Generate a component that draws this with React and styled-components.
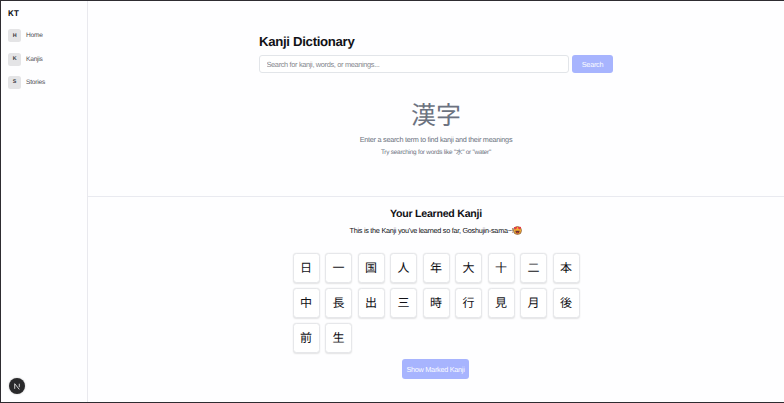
import React from "react";
import styled, { createGlobalStyle } from "styled-components";

const GlobalStyle = createGlobalStyle`
  * { box-sizing: border-box; }
  body { margin: 0; overflow: hidden; background: #fefeff; }
  h1, h2, p { margin: 0; }
`;

const Page = styled.div`
  display: flex;
  width: 784px;
  height: 403px;
  border: solid #2e2c31;
  border-width: 1px 0 1px 1px;
  background: #fefeff;
  color: #111116;
  font-family: "Liberation Sans", "Noto Sans CJK JP", sans-serif;
  text-rendering: geometricPrecision;
  white-space: nowrap;
`;

const Sidebar = styled.aside`
  display: flex;
  flex-direction: column;
  width: 87px;
  flex: none;
  padding: 7px 0 7px 7px;
  border-right: 1px solid #e9e9ee;
`;

const Brand = styled.div`
  height: 11px;
  font: 700 8px/11px Inter, sans-serif;
  letter-spacing: 0;
`;

const Nav = styled.nav`
  display: flex;
  flex-direction: column;
  gap: 10px;
  margin-top: 10px;
`;

const NavItem = styled.a`
  display: flex;
  align-items: center;
  gap: 5px;
  height: 13.4px;
  color: #4c4c53;
  font-size: 6.6px;
  letter-spacing: -0.22px;
`;

const NavBadge = styled.span`
  display: grid;
  place-items: center;
  width: 13px;
  height: 13px;
  border-radius: 2.5px;
  background: #e4e4e6;
  color: #38383e;
  font-size: 5.4px;
  font-weight: 700;
`;

const DevBadge = styled.div`
  display: grid;
  place-items: center;
  width: 16px;
  height: 16px;
  margin: auto 0 1px 1px;
  border-radius: 50%;
  background: #29292b;
  box-shadow: 0 0 2px #0004;
`;

const Main = styled.main`
  flex: 1;
  display: flex;
  flex-direction: column;
`;

const SearchSection = styled.section`
  height: 196px;
  padding-top: 32px;
  border-bottom: 1px solid #e9eaf0;
`;

const SearchPanel = styled.div`
  width: 354px;
  margin: 0 auto;
`;

const Title = styled.h1`
  font-size: 13.2px;
  line-height: 17px;
  letter-spacing: -0.31px;
`;

const SearchForm = styled.div`
  display: flex;
  gap: 3.5px;
  margin-top: 5px;
`;

const SearchInput = styled.input`
  flex: 1;
  min-width: 0;
  height: 18px;
  padding: 1px 6.5px 0;
  border: 1px solid #e2e5e9;
  border-radius: 3px;
  outline: none;
  background: #fff;
  font: 7.4px "Liberation Sans", sans-serif;
  letter-spacing: -0.34px;
  text-rendering: inherit;
  &::placeholder { color: #85878e; opacity: 1; }
`;

const Button = styled.button`
  flex: none;
  width: ${(p) => p.$width}px;
  height: ${(p) => p.$height}px;
  padding: 0;
  border: 0;
  border-radius: 3px;
  background: #a7b4fe;
  color: #fafbff;
  font: 7.3px "Liberation Sans", sans-serif;
  letter-spacing: -0.28px;
  text-rendering: inherit;
`;

const EmptyState = styled.div`
  display: flex;
  flex-direction: column;
  align-items: center;
  margin-top: 23px;
  color: #6b7280;
`;

const LargeKanji = styled.div`
  height: 38px;
  font: 25px/36px "Noto Sans CJK JP", sans-serif;
`;

const Hint = styled.p`
  height: 12px;
  font-size: ${(p) => p.$size}px;
  line-height: 12px;
  letter-spacing: ${(p) => p.$tracking}px;
  margin-bottom: 1px;
`;

const LearnedSection = styled.section`
  flex: 1;
  display: flex;
  flex-direction: column;
  align-items: center;
  padding-top: 10px;
`;

const Heading = styled.h2`
  font-size: 10.6px;
  line-height: 14px;
  letter-spacing: -0.25px;
`;

const Greeting = styled.p`
  display: flex;
  align-items: center;
  height: 10px;
  margin-top: 4px;
  font-size: 7.3px;
  letter-spacing: -0.29px;
`;

const KanjiGrid = styled.div`
  display: grid;
  grid-template-columns: repeat(9, 27px);
  gap: 5px 5.5px;
  margin-top: 18px;
`;

const KanjiCard = styled.div`
  display: grid;
  place-items: center;
  height: 30px;
  padding-bottom: 1px;
  border: 1px solid #e6e7ea;
  border-radius: 3.5px;
  background: #fff;
  box-shadow: 0 0.5px 1.5px #0000001c;
  font: 12px/17px "Noto Sans CJK JP", sans-serif;
`;

const Footer = styled.div`
  display: flex;
  margin: 6px 1px 0 0;
`;

const navItems = ["Home", "Kanjis", "Stories"];
const learned = [..."日一国人年大十二本中長出三時行見月後前生"];

function HeartFace() {
  return (
    <svg width="9" height="9" viewBox="0 0 18 18" aria-hidden="true">
      <circle cx="9" cy="9" r="8" fill="#f5ad36" stroke="#6a4538" strokeWidth="1.2" />
      <path d="M5 7 1.8 4.2Q1.3 1.8 3.4 2L5 3l1.5-1.3q2.2.1 1.5 2.5ZM13 7 9.8 4.2Q9.3 1.8 11.4 2L13 3l1.5-1.3q2.2.1 1.5 2.5Z" fill="#e73545" />
      <path d="M4.5 9.5h9Q13 15 9 15T4.5 9.5Z" fill="#64352c" />
      <path d="M6.4 13.2Q9 11.4 11.6 13.2 9 15.8 6.4 13.2Z" fill="#e73545" />
    </svg>
  );
}

function NextMark() {
  return (
    <svg width="8" height="8" viewBox="0 0 14 14" fill="none" stroke="#eee" strokeWidth="1.5" aria-hidden="true">
      <path d="M3 12V3l8 10" />
      <path d="M11 3v6" />
    </svg>
  );
}

export default function App() {
  return (
    <>
      <GlobalStyle />
      <Page>
        <Sidebar>
          <Brand>KT</Brand>
          <Nav>
            {navItems.map((name) => (
              <NavItem key={name}>
                <NavBadge>{name[0]}</NavBadge>
                {name}
              </NavItem>
            ))}
          </Nav>
          <DevBadge><NextMark /></DevBadge>
        </Sidebar>
        <Main>
          <SearchSection>
            <SearchPanel>
              <Title>Kanji Dictionary</Title>
              <SearchForm>
                <SearchInput placeholder="Search for kanji, words, or meanings..." />
                <Button $width={41} $height={18}>Search</Button>
              </SearchForm>
              <EmptyState>
                <LargeKanji>漢字</LargeKanji>
                <Hint $size={7.3} $tracking={-0.28}>Enter a search term to find kanji and their meanings</Hint>
                <Hint $size={6.4} $tracking={-0.23}>Try searching for words like "水" or "water"</Hint>
              </EmptyState>
            </SearchPanel>
          </SearchSection>
          <LearnedSection>
            <Heading>Your Learned Kanji</Heading>
            <Greeting>This is the Kanji you've learned so far, Goshujin-sama~!<HeartFace /></Greeting>
            <KanjiGrid>
              {learned.map((character) => <KanjiCard key={character}>{character}</KanjiCard>)}
            </KanjiGrid>
            <Footer>
              <Button $width={67} $height={20}>Show Marked Kanji</Button>
            </Footer>
          </LearnedSection>
        </Main>
      </Page>
    </>
  );
}
